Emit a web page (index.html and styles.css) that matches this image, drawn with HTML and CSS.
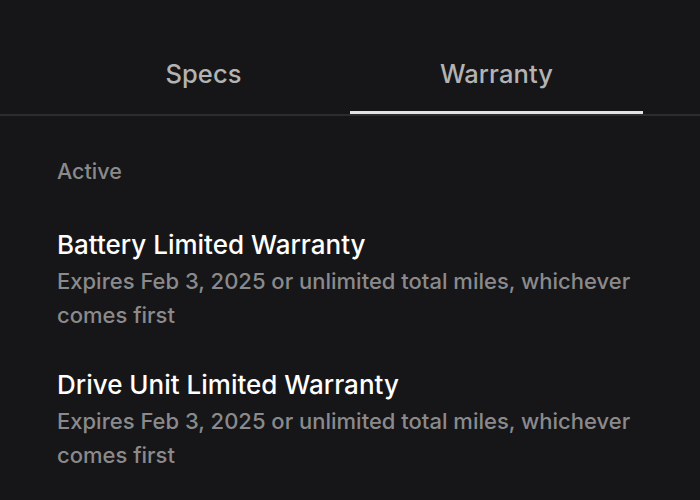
FILE: index.html
```html
<!DOCTYPE html>
<html>
<head>
<meta charset="utf-8">
<link rel="stylesheet" href="styles.css">
</head>
<body>
<div class="tabs">
  <div class="tab">Specs</div>
  <div class="tab active">Warranty</div>
</div>
<div class="content">
  <div class="section-label">Active</div>
  <div class="item">
    <div class="item-title">Battery Limited Warranty</div>
    <div class="item-desc">Expires Feb 3, 2025 or unlimited total miles, whichever comes first</div>
  </div>
  <div class="item">
    <div class="item-title">Drive Unit Limited Warranty</div>
    <div class="item-desc">Expires Feb 3, 2025 or unlimited total miles, whichever comes first</div>
  </div>
</div>
</body>
</html>
```
FILE: styles.css
```css
html, body {
  margin: 0;
  padding: 0;
  background: #161618;
  width: 700px;
  height: 500px;
  overflow: hidden;
  font-family: Inter, "Noto Sans", sans-serif;
}
.tabs {
  display: flex;
  padding: 0 57px;
  border-bottom: 2px solid #2c2c2e;
  height: 114px;
}
.tab {
  flex: 1;
  display: flex;
  align-items: center;
  justify-content: center;
  font-size: 25.5px;
  font-weight: 500;
  color: #b3b3b3;
  padding-top: 36px;
  box-sizing: border-box;
  border-bottom: 3px solid transparent;
  letter-spacing: 0.1px;
}
.tab.active {
  border-bottom-color: #e2e2e2;
}
.content {
  padding: 42px 57px 0;
}
.section-label {
  font-size: 21.5px;
  font-weight: 500;
  color: #8a8a8c;
  line-height: 26px;
  margin-bottom: 46px;
}
.item {
  margin-bottom: 38px;
}
.item-title {
  font-size: 26px;
  font-weight: 500;
  color: #ffffff;
  line-height: 30px;
  margin-bottom: 4px;
}
.item-desc {
  font-size: 22px;
  font-weight: 500;
  color: #8a8a8c;
  line-height: 34px;
}
```
